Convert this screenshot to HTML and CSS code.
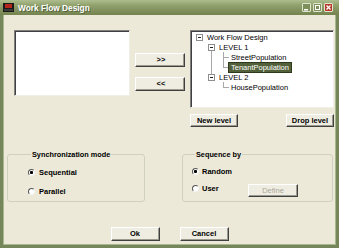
FILE: index.html
```html
<!DOCTYPE html>
<html>
<head>
<meta charset="utf-8">
<title>Work Flow Design</title>
<link rel="stylesheet" href="styles.css">
</head>
<body>
<div class="window">
  <div class="titlebar">
    <svg class="app-icon" width="11" height="9" viewBox="0 0 11 9">
      <rect x="0" y="0" width="11" height="9" fill="#1a1a1a"/>
      <rect x="2" y="1" width="7" height="4" fill="#b3261e"/>
      <rect x="1" y="6" width="9" height="2" fill="#3a3a3a"/>
    </svg>
    <span class="title">Work Flow Design</span>
    <div class="tb-buttons">
      <span class="tb-btn"><svg width="9" height="9" viewBox="0 0 9 9"><rect x="2" y="6" width="4" height="1.5" fill="#fff"/></svg></span>
      <span class="tb-btn"><svg width="9" height="9" viewBox="0 0 9 9"><rect x="2.5" y="2.5" width="4" height="4" fill="none" stroke="#fff" stroke-width="1"/></svg></span>
      <span class="tb-btn close"><svg width="9" height="9" viewBox="0 0 9 9"><path d="M2.5 2.5 L6.5 6.5 M6.5 2.5 L2.5 6.5" stroke="#fff" stroke-width="1.3"/></svg></span>
    </div>
  </div>
  <div class="frame">
    <div class="top">
      <div class="listbox"></div>
      <div class="move-col">
        <button class="btn move">&gt;&gt;</button>
        <button class="btn move">&lt;&lt;</button>
      </div>
      <div class="tree-col">
        <div class="tree">
          <div class="row">
            <span class="cell"><span class="exp"></span></span>
            <span class="label">Work Flow Design</span>
          </div>
          <div class="row">
            <span class="cell"></span>
            <span class="cell down"><span class="exp"></span></span>
            <span class="label">LEVEL 1</span>
          </div>
          <div class="row">
            <span class="cell"></span>
            <span class="cell v"></span>
            <span class="cell tee"></span>
            <span class="label">StreetPopulation</span>
          </div>
          <div class="row">
            <span class="cell"></span>
            <span class="cell v"></span>
            <span class="cell end"></span>
            <span class="label sel">TenantPopulation</span>
          </div>
          <div class="row">
            <span class="cell"></span>
            <span class="cell up"><span class="exp"></span></span>
            <span class="label">LEVEL 2</span>
          </div>
          <div class="row">
            <span class="cell"></span>
            <span class="cell"></span>
            <span class="cell end"></span>
            <span class="label">HousePopulation</span>
          </div>
        </div>
        <div class="tree-actions">
          <button class="btn level">New level</button>
          <button class="btn level">Drop level</button>
        </div>
      </div>
    </div>
    <div class="groups">
      <fieldset class="group sync">
        <legend>Synchronization mode</legend>
        <div class="opt"><span class="radio checked"></span><span>Sequential</span></div>
        <div class="opt"><span class="radio"></span><span>Parallel</span></div>
      </fieldset>
      <fieldset class="group seq">
        <legend>Sequence by</legend>
        <div class="opt"><span class="radio checked"></span><span>Random</span></div>
        <div class="opt user"><span class="radio"></span><span class="user-label">User</span><button class="btn define" disabled>Define</button></div>
      </fieldset>
    </div>
    <div class="footer">
      <button class="btn dlg">Ok</button>
      <button class="btn dlg">Cancel</button>
    </div>
  </div>
</div>
</body>
</html>
```
FILE: styles.css
```css
html, body {
  margin: 0;
  padding: 0;
  background: #ece9d8;
}
body {
  font-family: "Liberation Sans", Arial, sans-serif;
  font-size: 7.5px;
  color: #000;
}
.window {
  width: 339px;
  height: 248px;
  display: flex;
  flex-direction: column;
  background: #ece9d8;
  box-sizing: border-box;
}
.titlebar {
  height: 15px;
  flex: none;
  display: flex;
  align-items: center;
  gap: 4px;
  padding: 0 6px 0 3px;
  background: linear-gradient(#aebd8e 0%, #91a26d 35%, #7f8e5b 75%, #74844e 100%);
}
.app-icon { flex: none; }
.title {
  flex: 1;
  color: #fff;
  font-weight: bold;
  font-size: 8.3px;
  text-shadow: 1px 1px 0 #56653a;
  white-space: nowrap;
}
.tb-buttons {
  display: flex;
  gap: 2px;
}
.tb-btn {
  width: 9px;
  height: 9px;
  box-sizing: border-box;
  border: 1px solid #dfe5cf;
  border-radius: 1px;
  background: #7e9059;
  display: flex;
}
.tb-btn svg { margin: -1px; }
.tb-btn.close {
  background: #b8392a;
}
.frame {
  flex: 1;
  display: flex;
  flex-direction: column;
  border-style: solid;
  border-width: 0 3px 3px 3px;
  border-color: #75875a;
  box-shadow: inset 1px 0 #a8b78d, inset -1px 0 #a8b78d, inset 0 -1px #a8b78d;
}
.top {
  display: flex;
  align-items: flex-start;
  gap: 5px;
  margin: 15px 0 0 11px;
}
.listbox {
  width: 116px;
  height: 66px;
  box-sizing: border-box;
  background: #fff;
  border: 1px solid;
  border-color: #808080 #f0efe6 #f0efe6 #808080;
  box-shadow: inset 1px 1px 0 #404040;
}
.move-col {
  width: 50px;
  display: flex;
  flex-direction: column;
  gap: 10px;
  padding-top: 23px;
}
.btn {
  font-family: "Liberation Sans", Arial, sans-serif;
  font-size: 7.5px;
  color: #000;
  background: #efede2;
  border: 1px solid;
  border-color: #fff #404040 #404040 #fff;
  box-shadow: inset -1px -1px 0 #9c9a8c;
  padding: 0;
  margin: 0;
  box-sizing: border-box;
  line-height: 1;
  font-weight: bold;
}
.btn.move {
  height: 14px;
  width: 50px;
  padding-left: 2px;
}
.tree-col {
  width: 144px;
  display: flex;
  flex-direction: column;
  gap: 6px;
}
.tree {
  height: 78px;
  box-sizing: border-box;
  background: #fff;
  border: 1px solid;
  border-color: #808080 #f0efe6 #f0efe6 #808080;
  box-shadow: inset 1px 1px 0 #404040;
  padding: 1px 0 0 2px;
}
.row {
  display: flex;
  align-items: center;
  height: 10px;
}
.cell {
  width: 12px;
  height: 10px;
  flex: none;
  box-sizing: border-box;
  padding-left: 3px;
  display: flex;
  align-items: center;
}
.cell.v {
  background: linear-gradient(#a8a8a8, #a8a8a8) 6px 0 / 1px 100% no-repeat;
}
.cell.down {
  background: linear-gradient(#a8a8a8, #a8a8a8) 6px 5px / 1px 5px no-repeat;
}
.cell.up {
  background: linear-gradient(#a8a8a8, #a8a8a8) 6px 0 / 1px 5px no-repeat;
}
.cell.tee {
  background:
    linear-gradient(#a8a8a8, #a8a8a8) 6px 0 / 1px 100% no-repeat,
    linear-gradient(#a8a8a8, #a8a8a8) 6px 5px / 6px 1px no-repeat;
}
.cell.end {
  background:
    linear-gradient(#a8a8a8, #a8a8a8) 6px 0 / 1px 6px no-repeat,
    linear-gradient(#a8a8a8, #a8a8a8) 6px 5px / 6px 1px no-repeat;
}
.exp {
  width: 7px;
  height: 7px;
  box-sizing: border-box;
  border: 1px solid #8e8e8e;
  background: #fff linear-gradient(#222, #222) center / 3px 1px no-repeat;
}
.label {
  padding: 0 2px;
  line-height: 9px;
  white-space: nowrap;
  color: #000;
}
.label.sel {
  background: #52613a;
  color: #fff;
  box-shadow: 0 0 0 1px #2f3a1c;
}
.tree-actions {
  display: flex;
  justify-content: space-between;
}
.btn.level {
  width: 48px;
  height: 13px;
}
.groups {
  display: flex;
  gap: 37px;
  margin: 23px 0 0 4px;
}
.group {
  margin: 0;
  padding: 0;
  border: 1px solid #d0d0bf;
  border-radius: 3px;
  height: 52px;
  box-sizing: border-box;
  display: flex;
  flex-direction: column;
}
.group legend {
  padding: 0 1px;
  margin-left: 3px;
  line-height: 9px;
  font-size: 7.3px;
  font-weight: bold;
}
.group.sync {
  width: 138px;
  padding: 9px 0 0 20px;
  gap: 10px;
}
.group.seq {
  width: 151px;
  padding: 8px 0 0 9px;
  gap: 8px;
}
.opt {
  display: flex;
  align-items: center;
  gap: 4px;
  height: 9px;
  line-height: 9px;
  font-weight: bold;
}
.group.seq .opt { gap: 3px; }
.opt.user {
  align-items: flex-start;
  height: 13px;
}
.opt.user .radio { margin-top: 1px; }
.user-label { width: 43px; }
.radio {
  width: 7px;
  height: 7px;
  box-sizing: border-box;
  border-radius: 50%;
  border: 1px solid;
  border-color: #555 #f4f4f4 #f4f4f4 #555;
  background: #fff;
  flex: none;
}
.radio.checked {
  background: radial-gradient(circle, #000 0, #000 1.3px, #fff 1.8px);
}
.btn.define {
  width: 50px;
  height: 13px;
  color: #aca899;
  font-weight: normal;
}
.footer {
  margin-top: auto;
  display: flex;
  justify-content: center;
  gap: 20px;
  padding-bottom: 4px;
}
.btn.dlg {
  width: 49px;
  height: 14px;
}
```
